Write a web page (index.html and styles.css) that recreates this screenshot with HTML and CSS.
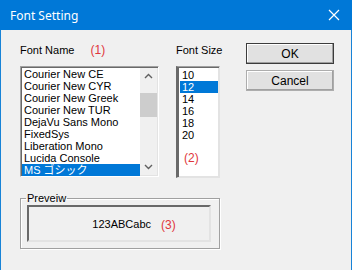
FILE: index.html
```html
<!DOCTYPE html>
<html lang="en">
<head>
  <meta charset="UTF-8" />
  <title>Font Setting</title>
  <link rel="stylesheet" href="styles.css">
</head>
<body>
  <div class="window">
    <div class="titlebar">
      <span class="title">Font Setting</span>
      <svg class="close" width="12" height="12" viewBox="0 0 12 12">
        <path d="M1 1 L11 11 M11 1 L1 11" stroke="#fff" stroke-width="1.2" fill="none" />
      </svg>
    </div>

    <div class="content">
      <div class="top-row">
        <div class="col-name">
          <div class="label">Font Name <span class="mark">(1)</span></div>
          <div class="listbox name-list">
            <div class="items">
              <div class="item">Courier New CE</div>
              <div class="item">Courier New CYR</div>
              <div class="item">Courier New Greek</div>
              <div class="item">Courier New TUR</div>
              <div class="item">DejaVu Sans Mono</div>
              <div class="item">FixedSys</div>
              <div class="item">Liberation Mono</div>
              <div class="item">Lucida Console</div>
              <div class="item selected">MS ゴシック</div>
            </div>
            <div class="scrollbar">
              <svg width="17" height="17" viewBox="0 0 17 17">
                <path d="M5 10 L8.5 6.5 L12 10" stroke="#606060" stroke-width="1.4" fill="none" />
              </svg>
              <div class="track"><div class="thumb"></div></div>
              <svg width="17" height="17" viewBox="0 0 17 17">
                <path d="M5 7 L8.5 10.5 L12 7" stroke="#606060" stroke-width="1.4" fill="none" />
              </svg>
            </div>
          </div>
        </div>

        <div class="col-size">
          <div class="label">Font Size</div>
          <div class="listbox size-list">
            <div class="item">10</div>
            <div class="item selected">12</div>
            <div class="item">14</div>
            <div class="item">16</div>
            <div class="item">18</div>
            <div class="item">20</div>
            <div class="mark size-mark">(2)</div>
          </div>
        </div>

        <div class="col-buttons">
          <button class="btn btn-default">OK</button>
          <button class="btn">Cancel</button>
        </div>
      </div>

      <fieldset class="group">
        <legend>Preveiw</legend>
        <div class="preview">
          <span class="sample">123ABCabc</span>
          <span class="mark">(3)</span>
        </div>
      </fieldset>
    </div>
  </div>
</body>
</html>
```

FILE: styles.css
```css
body {
  margin: 0;
  font-family: 'Liberation Sans', Arial, 'Noto Sans CJK JP', sans-serif;
  font-size: 11px;
  color: #000;
  background: #f0f0f0;
}
.window {
  width: 352px;
  height: 270px;
  box-sizing: border-box;
  border-left: 1px solid #1883d7;
  border-right: 1px solid #1883d7;
  background: #f0f0f0;
}
.titlebar {
  height: 30px;
  margin: 0 -1px;
  background: #0078d7;
  display: flex;
  align-items: center;
  justify-content: space-between;
  padding: 0 12px 0 10px;
}
.title {
  color: #fff;
  font-family: 'Noto Sans', sans-serif;
  font-size: 12px;
}
.close {
  display: block;
}
.content {
  padding: 12px 0 0 19px;
}
.top-row {
  display: flex;
}
.label {
  height: 16px;
  line-height: 16px;
  margin-bottom: 8px;
  white-space: nowrap;
}
.mark {
  color: #e0363c;
  margin-left: 13px;
  font-size: 12px;
}
.listbox {
  background: #fff;
  border: 1px solid;
  border-color: #a0a0a0 #fff #fff #a0a0a0;
  box-shadow: inset 1px 1px #696969, inset -1px -1px #e3e3e3;
  box-sizing: border-box;
}
.item {
  height: 12px;
  line-height: 12px;
  padding-left: 2px;
  white-space: nowrap;
}
.item.selected {
  background: #0078d7;
  color: #fff;
}
.col-name {
  width: 139px;
}
.name-list {
  height: 111px;
  display: flex;
  padding: 1px;
}
.items {
  flex: 1;
}
.scrollbar {
  width: 17px;
  background: #f0f0f0;
  display: flex;
  flex-direction: column;
}
.scrollbar svg {
  display: block;
}
.track {
  flex: 1;
  padding-top: 8px;
}
.thumb {
  height: 24px;
  background: #cdcdcd;
}
.col-size {
  width: 44px;
  margin-left: 17px;
}
.size-list {
  height: 112px;
  padding: 2px 1px 1px 2px;
  border-color: #a0a0a0 #e3e3e3 #e3e3e3 #696969;
  border-width: 1px 1px 1px 2px;
}
.size-mark {
  margin: 10px 0 0 4px;
}
.col-buttons {
  margin-left: 26px;
  padding-top: 1px;
  display: flex;
  flex-direction: column;
  gap: 6px;
}
.btn {
  width: 88px;
  height: 21px;
  font-family: 'Liberation Sans', Arial, sans-serif;
  font-size: 12px;
  background: #e1e1e1;
  border: 1px solid #adadad;
  box-shadow: inset -1px -1px #a0a0a0, inset 1px 1px #fff;
  padding: 0;
}
.btn-default {
  border-color: #3c3c3c;
}
.group {
  width: 200px;
  box-sizing: border-box;
  margin: 14px 0 0 0;
  padding: 1px 8px 6px 6px;
  border: 1px solid #a0a0a0;
  box-shadow: inset 1px 1px #fff, 1px 1px #fff;
}
.group legend {
  padding: 0 1px;
  margin-left: -1px;
  line-height: 12px;
}
.preview {
  height: 37px;
  box-sizing: border-box;
  border: 2px solid;
  border-color: #696969 #e3e3e3 #e3e3e3 #696969;
  display: flex;
  align-items: center;
  justify-content: center;
  padding-left: 30px;
}
.preview .mark {
  margin-left: 10px;
  margin-top: 3px;
}
```
